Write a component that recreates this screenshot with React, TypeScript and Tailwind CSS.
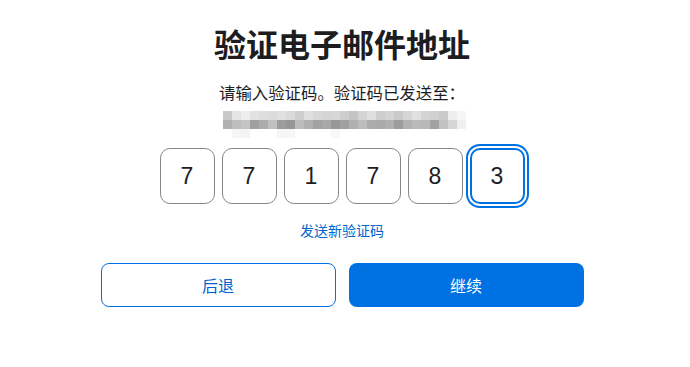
const digits = ['7', '7', '1', '7', '8', '3'];

// pixelated (blurred) email address, row by row
const blurRows: number[][] = [
  [200, 228, 238, 226, 222, 220, 224, 218, 206, 222, 216, 212, 214, 206, 196, 212, 222, 206, 212, 202, 214, 224, 212, 208, 202, 238, 246],
  [176, 190, 196, 160, 172, 192, 156, 150, 188, 176, 162, 168, 152, 160, 176, 188, 172, 170, 176, 156, 178, 186, 184, 162, 194, 214, 240],
  [255, 246, 244, 255, 255, 255, 246, 246, 255, 255, 255, 255, 248, 255, 255, 255, 255, 255, 255, 255, 255, 255, 255, 255, 255, 255, 255],
];

export default function App() {
  return (
    <div
      className="w-[690px] h-[367px] bg-white flex flex-col items-center pr-[6px]"
      style={{ fontFamily: '"Noto Sans CJK SC", "Noto Sans", sans-serif' }}
    >
      <h1 className="mt-[22px] text-[32px] leading-[42px] font-bold text-[#1d1d1f]">验证电子邮件地址</h1>
      <p className="mt-[17px] text-[16.4px] leading-[22px] text-[#1d1d1f]">请输入验证码。验证码已发送至：</p>
      <div className="mt-[8px] ml-[4px] flex flex-col" aria-hidden>
        {blurRows.map((row, r) => (
          <div key={r} className="flex">
            {row.map((g, i) => (
              <div key={i} className="w-[9px] h-[9px]" style={{ backgroundColor: `rgb(${g},${g},${g})` }} />
            ))}
          </div>
        ))}
      </div>

      <div className="mt-[10px] flex gap-[7px]" style={{ fontFamily: '"Liberation Sans", Arial, sans-serif' }}>
        {digits.map((d, i) => {
          const focused = i === digits.length - 1;
          return (
            <div
              key={i}
              className={`w-[55px] h-[56px] rounded-[10px] flex items-center justify-center text-[23px] text-[#1d1d1f] bg-white ${
                focused
                  ? 'border-2 border-[#0071e3] ring-2 ring-[#0071e3] ring-offset-2'
                  : 'border border-[#86868b]'
              }`}
            >
              {d}
            </div>
          );
        })}
      </div>

      <a className="mt-[16px] text-[14px] leading-[20px] text-[#0066cc] cursor-pointer">发送新验证码</a>

      <div className="mt-[23px] flex gap-[13px]">
        <button className="w-[235px] h-[44px] rounded-[8px] border border-[#0071e3] bg-white text-[16px] text-[#0066cc]">
          后退
        </button>
        <button className="w-[235px] h-[44px] rounded-[8px] bg-[#0071e3] text-[16px] text-white">
          继续
        </button>
      </div>
    </div>
  );
}
